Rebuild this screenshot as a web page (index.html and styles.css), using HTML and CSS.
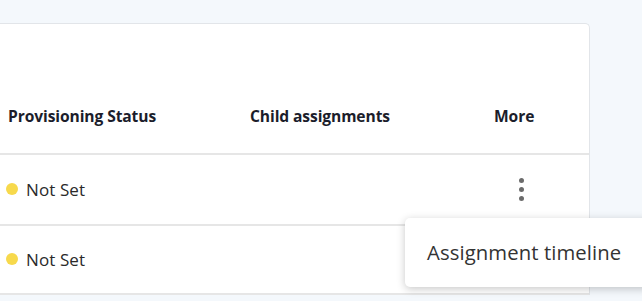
FILE: index.html
```html
<!DOCTYPE html>
<html>
<head>
<meta charset="utf-8">
<link rel="stylesheet" href="styles.css">
</head>
<body>
<div class="page">
  <div class="card">
    <div class="toolbar"></div>
    <div class="row head">
      <div class="cell">Provisioning Status</div>
      <div class="cell">Child assignments</div>
      <div class="cell">More</div>
    </div>
    <div class="row body">
      <div class="cell status"><span class="dot"></span>Not Set</div>
      <div class="cell"></div>
      <div class="cell more"><span class="kebab"><i></i><i></i><i></i></span></div>
    </div>
    <div class="row body second">
      <div class="cell status"><span class="dot"></span>Not Set</div>
      <div class="cell"></div>
      <div class="cell"></div>
    </div>
  </div>
  <div class="menu">
    <div class="menu-item">Assignment timeline</div>
  </div>
</div>
</body>
</html>
```
FILE: styles.css
```css
html, body {
  margin: 0;
  padding: 0;
}
body {
  background: #f4f8fc;
  font-family: "Open Sans", "Noto Sans", sans-serif;
  width: 642px;
  height: 301px;
  overflow: hidden;
}
.page {
  position: relative;
  padding-top: 23px;
}
.card {
  width: 589px;
  background: #ffffff;
  border: 1px solid #e2e5e9;
  border-left: none;
  border-radius: 0 5px 0 0;
  border-bottom: none;
}
.toolbar {
  height: 57px;
}
.row {
  display: grid;
  grid-template-columns: 242px 244px 1fr;
  align-items: center;
  border-bottom: 2px solid #e6e6e6;
}
.head {
  height: 72px;
  font-weight: 700;
  font-size: 15.6px;
  color: #1b1d2b;
  letter-spacing: -0.1px;
}
.head .cell {
  padding-left: 8px;
  padding-bottom: 2px;
}
.body {
  height: 69px;
  font-size: 17px;
  color: #2a2a2a;
}
.second {
  height: 67px;
}
.status {
  display: flex;
  align-items: center;
  padding-left: 6px;
  gap: 8px;
  letter-spacing: 0.1px;
  padding-bottom: 1px;
}
.dot {
  width: 12px;
  height: 12px;
  border-radius: 50%;
  background: #f7d94c;
}
.more {
  padding-left: 33px;
}
.kebab {
  display: flex;
  flex-direction: column;
  gap: 4px;
  width: 5px;
}
.kebab i {
  display: block;
  width: 5px;
  height: 5px;
  border-radius: 50%;
  background: #6b6b6b;
}
.menu {
  position: absolute;
  left: 405px;
  top: 218px;
  width: 245px;
  height: 69px;
  background: #ffffff;
  border-radius: 5px;
  box-shadow: 0 2px 8px rgba(0, 0, 0, 0.22);
  display: flex;
  align-items: center;
}
.menu-item {
  padding-left: 22px;
  font-size: 20.3px;
  letter-spacing: 0.1px;
  color: #333333;
  padding-bottom: 1px;
}
```
